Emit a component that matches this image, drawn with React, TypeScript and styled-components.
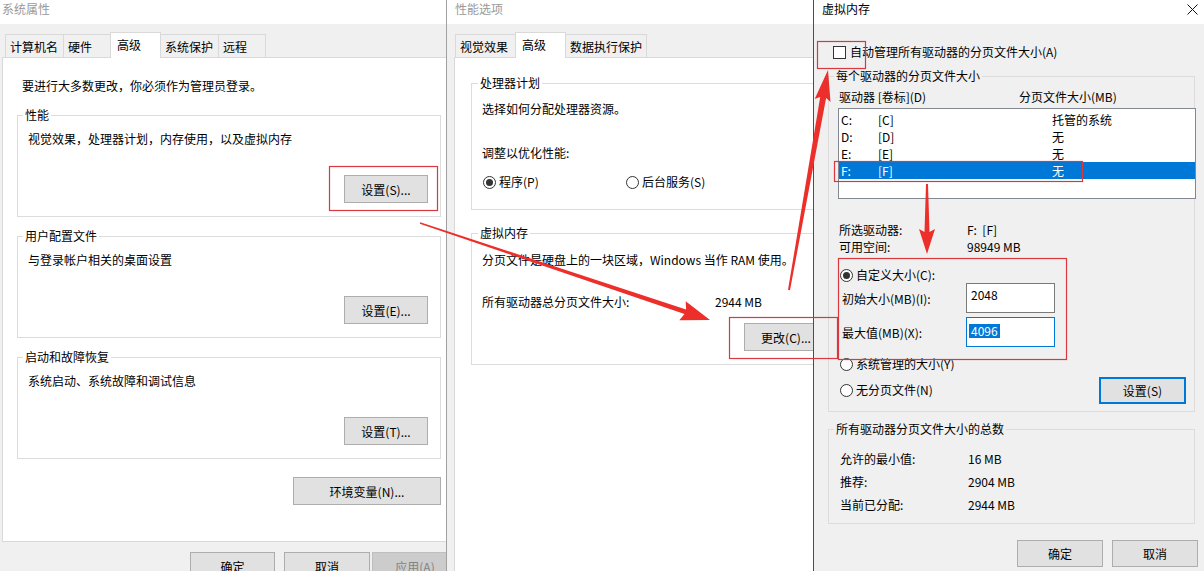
import React from "react";
import styled, { createGlobalStyle } from "styled-components";

const GlobalStyle = createGlobalStyle`
  html, body {
    margin: 0;
    padding: 0;
    background: #f0f0f0;
  }
  body {
    font-family: "Microsoft YaHei", "Noto Sans CJK SC", "Noto Sans", sans-serif;
    font-size: 12px;
    color: #000;
  }
  *, *::before, *::after {
    box-sizing: border-box;
  }
`;

const Screen = styled.div`
  position: relative;
  display: flex;
  width: 1204px;
  height: 571px;
  overflow: hidden;
  background: #f0f0f0;
`;

const Window = styled.div<{ $width: number; $edge?: string }>`
  flex: none;
  display: flex;
  flex-direction: column;
  width: ${(p) => p.$width}px;
  height: 100%;
  overflow: hidden;
  background: #f0f0f0;
  border-left: ${(p) => (p.$edge ? `1px solid ${p.$edge}` : "0")};
`;

const TitleBar = styled.div<{ $indent: number; $active?: boolean }>`
  flex: none;
  display: flex;
  justify-content: space-between;
  align-items: flex-start;
  height: 24px;
  padding: 1px 6px 0 ${(p) => p.$indent}px;
  line-height: 16px;
  background: #fff;
  color: ${(p) => (p.$active ? "#000" : "#9a9a9a")};
  white-space: nowrap;
`;

const CloseGlyph = styled.svg`
  flex: none;
  margin-top: 3px;
`;

// tabs
const TabStrip = styled.div<{ $indent: number }>`
  position: relative;
  z-index: 1;
  flex: none;
  display: flex;
  align-items: flex-end;
  height: 23px;
  margin-top: 10px;
  padding-left: ${(p) => p.$indent}px;
`;

const Tab = styled.div<{ $w: number; $selected?: boolean }>`
  position: relative;
  z-index: ${(p) => (p.$selected ? 2 : 1)};
  flex: none;
  width: ${(p) => p.$w}px;
  height: ${(p) => (p.$selected ? 26 : 23)}px;
  margin-right: -1px;
  margin-bottom: ${(p) => (p.$selected ? -1 : 0)}px;
  padding: 4px 0 0 ${(p) => (p.$selected ? 6 : 4)}px;
  line-height: 16px;
  white-space: nowrap;
  background: ${(p) => (p.$selected ? "#fff" : "#f0f0f0")};
  border: 1px solid #d9d9d9;
  border-bottom: 0;
`;

const Panel = styled.div<{ $left: number; $width: number; $height: number; $top: number }>`
  flex: none;
  margin-left: ${(p) => p.$left}px;
  width: ${(p) => p.$width}px;
  height: ${(p) => p.$height}px;
  padding-top: ${(p) => p.$top}px;
  background: #fff;
  border: 1px solid #d9d9d9;
`;

// group box
const GroupBox = styled.fieldset<{ $m: string; $p: string; $pl: number; $w?: number; $text?: number }>`
  display: block;
  min-width: 0;
  width: ${(p) => (p.$w ? `${p.$w}px` : "auto")};
  margin: ${(p) => p.$m};
  padding: ${(p) => p.$p};
  padding-left: ${(p) => p.$pl}px;
  border: 1px solid #dcdcdc;

  & > legend {
    margin-left: ${(p) => (p.$text ?? 8) - 3 - p.$pl}px;
    padding: 0 2px;
    line-height: 16px;
    white-space: nowrap;
  }
`;

const Line = styled.div<{ $mt?: number; $indent?: number }>`
  margin-top: ${(p) => p.$mt ?? 0}px;
  padding-left: ${(p) => p.$indent ?? 0}px;
  line-height: 16px;
  white-space: nowrap;
`;

const Pairs = styled.div<{ $mt?: number; $col: number; $lh: number }>`
  display: grid;
  grid-template-columns: ${(p) => p.$col}px auto;
  margin-top: ${(p) => p.$mt ?? 0}px;
  line-height: ${(p) => p.$lh}px;
  white-space: nowrap;
`;

const ButtonRow = styled.div<{ $mt: number; $pr?: number; $pl?: number; $gap?: number; $end?: boolean }>`
  display: flex;
  justify-content: ${(p) => (p.$end ? "flex-end" : "flex-start")};
  gap: ${(p) => p.$gap ?? 0}px;
  margin-top: ${(p) => p.$mt}px;
  padding-right: ${(p) => p.$pr ?? 0}px;
  padding-left: ${(p) => p.$pl ?? 0}px;
`;

const Button = styled.div<{ $w: number; $h?: number; $focus?: boolean; $disabled?: boolean }>`
  flex: none;
  display: flex;
  align-items: center;
  justify-content: center;
  width: ${(p) => p.$w}px;
  height: ${(p) => p.$h ?? 28}px;
  white-space: nowrap;
  background: ${(p) => (p.$disabled ? "#cccccc" : "#e1e1e1")};
  border: ${(p) =>
    p.$focus ? "2px solid #0078d7" : `1px solid ${p.$disabled ? "#bfbfbf" : "#adadad"}`};
  color: ${(p) => (p.$disabled ? "#838383" : "#000")};
`;

const ApplyButton = styled(Button)`
  margin-left: -7px;
`;

// radios / checkbox
const Option = styled.div<{ $mt?: number; $ml?: number }>`
  display: flex;
  align-items: center;
  gap: 3px;
  margin-top: ${(p) => p.$mt ?? 0}px;
  margin-left: ${(p) => p.$ml ?? 0}px;
  line-height: 16px;
  white-space: nowrap;
`;

const RadioDot = styled.span<{ $on?: boolean }>`
  flex: none;
  display: inline-flex;
  align-items: center;
  justify-content: center;
  width: 13px;
  height: 13px;
  border: 1px solid #333;
  border-radius: 50%;
  background: #fff;
  &::after {
    content: "";
    width: 7px;
    height: 7px;
    border-radius: 50%;
    background: ${(p) => (p.$on ? "#333" : "transparent")};
  }
`;

const CheckBox = styled.span`
  flex: none;
  width: 13px;
  height: 13px;
  margin-right: 1px;
  border: 1px solid #333;
  background: #fff;
`;

const RadioPair = styled.div<{ $mt: number; $col: number }>`
  display: grid;
  grid-template-columns: ${(p) => p.$col}px auto;
  margin-top: ${(p) => p.$mt}px;
  margin-left: 1px;
`;

// virtual memory list
const HeaderRow = styled.div`
  display: grid;
  grid-template-columns: 180px auto;
  margin-top: 5px;
  line-height: 16px;
  white-space: nowrap;
`;

const DriveList = styled.div`
  height: 91px;
  margin: 3px -10px 0 -1px;
  padding-top: 2px;
  background: #fff;
  border: 1px solid #828790;
`;

const DriveRow = styled.div<{ $selected?: boolean }>`
  display: grid;
  grid-template-columns: 37px 174px auto;
  height: 17px;
  padding-left: 2px;
  line-height: 17px;
  white-space: nowrap;
  background: ${(p) => (p.$selected ? "#0078d7" : "transparent")};
  color: ${(p) => (p.$selected ? "#fff" : "#000")};
`;

const SizeRow = styled.div<{ $mt: number }>`
  display: grid;
  grid-template-columns: 124px 89px;
  align-items: center;
  height: 30px;
  margin-top: ${(p) => p.$mt}px;
  padding-left: 3px;
  white-space: nowrap;
`;

const EditBox = styled.div<{ $focus?: boolean }>`
  height: 30px;
  padding: ${(p) => (p.$focus ? "5px 0 0 2px" : "3px 0 0 4px")};
  line-height: 16px;
  background: #fff;
  border: 1px solid ${(p) => (p.$focus ? "#0078d7" : "#7a7a7a")};
`;

const Selection = styled.span`
  display: inline-block;
  padding: 0 2px;
  line-height: 14px;
  background: #0078d7;
  color: #fff;
`;

const LastOptionRow = styled.div`
  display: flex;
  align-items: center;
  justify-content: space-between;
  height: 26px;
  margin-top: 5px;
`;

const Overlay = styled.svg`
  position: absolute;
  left: 0;
  top: 0;
  pointer-events: none;
`;

type Pt = [number, number];

// tapered red arrow: thin tail, wider shaft near the head
function arrow(s: Pt, t: Pt, w0: number, w1: number, head: number, half: number) {
  const dx = t[0] - s[0];
  const dy = t[1] - s[1];
  const len = Math.hypot(dx, dy);
  const ux = dx / len;
  const uy = dy / len;
  const nx = -uy;
  const ny = ux;
  const bx = t[0] - ux * head;
  const by = t[1] - uy * head;
  const pts: Pt[] = [
    [s[0] + (nx * w0) / 2, s[1] + (ny * w0) / 2],
    [bx + (nx * w1) / 2, by + (ny * w1) / 2],
    [bx + nx * half - ux * 3, by + ny * half - uy * 3],
    t,
    [bx - nx * half - ux * 3, by - ny * half - uy * 3],
    [bx - (nx * w1) / 2, by - (ny * w1) / 2],
    [s[0] - (nx * w0) / 2, s[1] - (ny * w0) / 2],
  ];
  return pts.map((p) => p.map((v) => v.toFixed(1)).join(",")).join(" ");
}

const marks = [
  { x: 329, y: 166, w: 108, h: 44 },
  { x: 729, y: 317, w: 108, h: 41 },
  { x: 817, y: 41, w: 48, h: 27 },
  { x: 834, y: 161, w: 248, h: 20 },
  { x: 838, y: 258, w: 228, h: 101 },
];

const drives = [
  { d: "C:", l: "[C]", s: "托管的系统" },
  { d: "D:", l: "[D]", s: "无" },
  { d: "E:", l: "[E]", s: "无" },
  { d: "F:", l: "[F]", s: "无", sel: true },
];

function App() {
  return (
    <Screen>
      <GlobalStyle />

      {/* 系统属性 */}
      <Window $width={446}>
        <TitleBar $indent={2}>系统属性</TitleBar>
        <TabStrip $indent={5}>
          <Tab $w={59}>计算机名</Tab>
          <Tab $w={48}>硬件</Tab>
          <Tab $w={51} $selected>
            高级
          </Tab>
          <Tab $w={59}>系统保护</Tab>
          <Tab $w={48}>远程</Tab>
        </TabStrip>
        <Panel $left={2} $width={446} $height={485} $top={20}>
          <Line $indent={19}>要进行大多数更改，你必须作为管理员登录。</Line>
          <GroupBox $m="13px 6px 0 14px" $p="0 12px 13px 0" $pl={10}>
            <legend>性能</legend>
            <Line $mt={8}>视觉效果，处理器计划，内存使用，以及虚拟内存</Line>
            <ButtonRow $mt={28} $end>
              <Button $w={84}>设置(S)...</Button>
            </ButtonRow>
          </GroupBox>
          <GroupBox $m="11px 6px 0 14px" $p="0 12px 13px 0" $pl={10}>
            <legend>用户配置文件</legend>
            <Line $mt={8}>与登录帐户相关的桌面设置</Line>
            <ButtonRow $mt={28} $end>
              <Button $w={84}>设置(E)...</Button>
            </ButtonRow>
          </GroupBox>
          <GroupBox $m="11px 6px 0 14px" $p="0 12px 13px 0" $pl={10}>
            <legend>启动和故障恢复</legend>
            <Line $mt={8}>系统启动、系统故障和调试信息</Line>
            <ButtonRow $mt={28} $end>
              <Button $w={84}>设置(T)...</Button>
            </ButtonRow>
          </GroupBox>
          <ButtonRow $mt={18} $pr={6} $end>
            <Button $w={148}>环境变量(N)...</Button>
          </ButtonRow>
        </Panel>
        <ButtonRow $mt={10} $pl={190} $gap={9}>
          <Button $w={85}>确定</Button>
          <Button $w={86}>取消</Button>
          <ApplyButton $w={86} $disabled>
            应用(A)
          </ApplyButton>
        </ButtonRow>
      </Window>

      {/* 性能选项 */}
      <Window $width={367} $edge="#a0a0a0">
        <TitleBar $indent={8}>性能选项</TitleBar>
        <TabStrip $indent={8}>
          <Tab $w={61}>视觉效果</Tab>
          <Tab $w={51} $selected>
            高级
          </Tab>
          <Tab $w={82}>数据执行保护</Tab>
        </TabStrip>
        <Panel $left={7} $width={430} $height={540} $top={17}>
          <GroupBox $m="0 0 0 16px" $p="0 0 19px 0" $pl={10} $w={400} $text={9}>
            <legend>处理器计划</legend>
            <Line $mt={10}>选择如何分配处理器资源。</Line>
            <Line $mt={28}>调整以优化性能:</Line>
            <RadioPair $mt={13} $col={143}>
              <Option>
                <RadioDot $on />
                程序(P)
              </Option>
              <Option>
                <RadioDot />
                后台服务(S)
              </Option>
            </RadioPair>
          </GroupBox>
          <GroupBox $m="15px 0 0 16px" $p="0 0 13px 0" $pl={10} $w={400} $text={9}>
            <legend>虚拟内存</legend>
            <Line $mt={11}>分页文件是硬盘上的一块区域，Windows 当作 RAM 使用。</Line>
            <Pairs $mt={26} $col={233} $lh={16}>
              <span>所有驱动器总分页文件大小:</span>
              <span>2944 MB</span>
            </Pairs>
            <ButtonRow $mt={13} $pl={262}>
              <Button $w={84}>更改(C)...</Button>
            </ButtonRow>
          </GroupBox>
        </Panel>
      </Window>

      {/* 虚拟内存 */}
      <Window $width={391} $edge="#4d4d4d">
        <TitleBar $indent={8} $active>
          <span>虚拟内存</span>
          <CloseGlyph width="11" height="11" viewBox="0 0 11 11">
            <path d="M0.5 0.5 L10.5 10.5 M10.5 0.5 L0.5 10.5" stroke="#111" strokeWidth="1" />
          </CloseGlyph>
        </TitleBar>
        <Option $mt={20} $ml={19}>
          <CheckBox />
          自动管理所有驱动器的分页文件大小(A)
        </Option>
        <GroupBox $m="8px 9px 0 14px" $p="0 8px 8px 0" $pl={10}>
          <legend>每个驱动器的分页文件大小</legend>
          <HeaderRow>
            <span>驱动器 [卷标](D)</span>
            <span>分页文件大小(MB)</span>
          </HeaderRow>
          <DriveList>
            {drives.map((r) => (
              <DriveRow key={r.d} $selected={r.sel}>
                <span>{r.d}</span>
                <span>{r.l}</span>
                <span>{r.s}</span>
              </DriveRow>
            ))}
          </DriveList>
          <Pairs $mt={22} $col={128} $lh={17}>
            <span>所选驱动器:</span>
            <span>F:&nbsp;&nbsp;[F]</span>
            <span>可用空间:</span>
            <span>98949 MB</span>
          </Pairs>
          <Option $mt={12} $ml={1}>
            <RadioDot $on />
            自定义大小(C):
          </Option>
          <SizeRow $mt={0}>
            <span>初始大小(MB)(I):</span>
            <EditBox>2048</EditBox>
          </SizeRow>
          <SizeRow $mt={4}>
            <span>最大值(MB)(X):</span>
            <EditBox $focus>
              <Selection>4096</Selection>
            </EditBox>
          </SizeRow>
          <Option $mt={9} $ml={1}>
            <RadioDot />
            系统管理的大小(Y)
          </Option>
          <LastOptionRow>
            <Option $ml={1}>
              <RadioDot />
              无分页文件(N)
            </Option>
            <Button $w={87} $h={27} $focus>
              设置(S)
            </Button>
          </LastOptionRow>
        </GroupBox>
        <GroupBox $m="9px 9px 0 14px" $p="0 8px 7px 0" $pl={11}>
          <legend>所有驱动器分页文件大小的总数</legend>
          <Pairs $mt={10} $col={128} $lh={23}>
            <span>允许的最小值:</span>
            <span>16 MB</span>
            <span>推荐:</span>
            <span>2904 MB</span>
            <span>当前已分配:</span>
            <span>2944 MB</span>
          </Pairs>
        </GroupBox>
        <ButtonRow $mt={16} $pr={6} $gap={9} $end>
          <Button $w={86} $h={27}>
            确定
          </Button>
          <Button $w={86} $h={27}>
            取消
          </Button>
        </ButtonRow>
      </Window>

      <Overlay width="1204" height="571" viewBox="0 0 1204 571">
        {marks.map((m, i) => (
          <rect
            key={i}
            x={m.x + 0.5}
            y={m.y + 0.5}
            width={m.w}
            height={m.h}
            fill="none"
            stroke="#d9383f"
            strokeWidth="1.2"
          />
        ))}
        <polygon points={arrow([420, 223], [710, 320], 1.5, 5, 26, 10)} fill="#ec2f2b" />
        <polygon points={arrow([789, 290], [828, 70], 2, 6, 28, 8)} fill="#ec2f2b" />
        <polygon points={arrow([927, 184], [927, 254], 2, 5, 22, 8)} fill="#ec2f2b" />
      </Overlay>
    </Screen>
  );
}

export default App;
